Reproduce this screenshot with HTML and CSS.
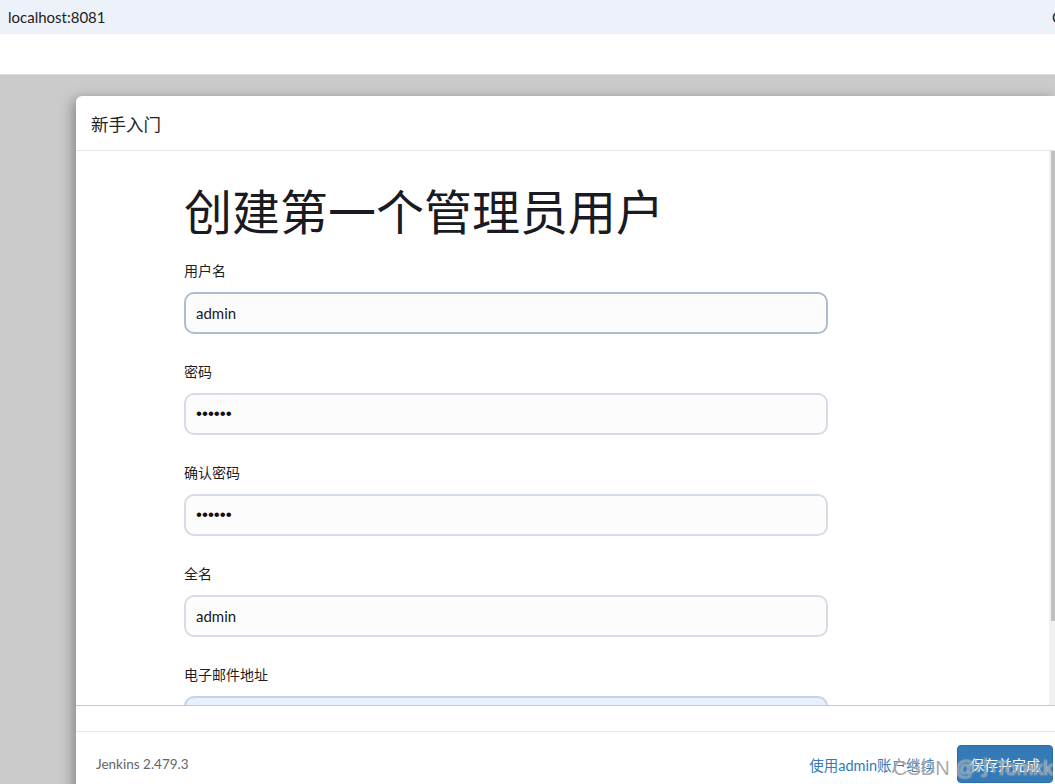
FILE: index.html
```html
<!DOCTYPE html>
<html lang="zh-CN">
<head>
<meta charset="utf-8">
<title>Jenkins</title>
<link rel="stylesheet" href="styles.css">
</head>
<body>
<div class="topbar"><span class="url">localhost:8081</span><span class="edge">C</span></div>
<div class="strip"></div>
<div class="stage">
  <div class="dialog">
    <div class="dlg-header">新手入门</div>
    <div class="dlg-body">
      <div class="content">
        <h1 class="title">创建第一个管理员用户</h1>
        <div class="field">
          <label class="lbl">用户名</label>
          <input class="inp inp-active" type="text" value="admin">
        </div>
        <div class="field">
          <label class="lbl">密码</label>
          <input class="inp inp-pw" type="password" value="aaaaaa">
        </div>
        <div class="field">
          <label class="lbl">确认密码</label>
          <input class="inp inp-pw" type="password" value="aaaaaa">
        </div>
        <div class="field">
          <label class="lbl">全名</label>
          <input class="inp" type="text" value="admin">
        </div>
        <div class="field">
          <label class="lbl">电子邮件地址</label>
          <input class="inp inp-auto" type="text" value="">
        </div>
      </div>
      <div class="scrollbar"><div class="thumb"></div></div>
    </div>
    <div class="dlg-gap"></div>
    <div class="dlg-footer">
      <span class="version">Jenkins 2.479.3</span>
      <span class="spacer"></span>
      <a class="skip" href="#">使用admin账户继续</a>
      <button class="save">保存并完成</button>
    </div>
  </div>
</div>
<div class="watermark">CSDN @小Tomkk</div>
</body>
</html>
```
FILE: styles.css
```css
html, body {
  margin: 0;
  padding: 0;
  height: 784px;
  overflow: hidden;
}
body {
  background: #cbcbcb;
  font-family: Lato, "Noto Sans CJK SC", sans-serif;
  color: #222;
  position: relative;
}
.topbar {
  height: 34px;
  background: #edf2fa;
  display: flex;
  align-items: center;
  justify-content: space-between;
  padding-left: 8px;
  overflow: hidden;
  font-size: 15px;
  color: #222;
}
.edge {
  margin-right: -7px;
  font-size: 15px;
}
.strip {
  height: 40px;
  background: #fff;
  border-bottom: 1px solid #dedede;
}
.stage {
  padding-top: 21px;
  padding-left: 76px;
}
.dialog {
  background: #fff;
  border-radius: 6px 0 0 0;
  box-shadow: -3px 3px 14px rgba(0, 0, 0, 0.35);
  height: 720px;
}
.dlg-header {
  height: 55px;
  box-sizing: border-box;
  padding: 0 15px;
  display: flex;
  align-items: center;
  font-size: 17.5px;
  color: #222;
  border-bottom: 1px solid #e5e5e5;
}
.dlg-body {
  height: 554px;
  display: flex;
  border-bottom: 1px solid #c9c9c9;
  overflow: hidden;
}
.content {
  flex: 1;
  padding: 31px 0 0 108px;
  overflow: hidden;
}
.title {
  margin: 0 0 24px;
  font-family: "Noto Sans CJK SC", sans-serif;
  font-size: 48px;
  line-height: 54px;
  font-weight: 400;
  color: #1a1a22;
}
.field {
  margin-bottom: 27px;
}
.lbl {
  display: block;
  font-size: 14px;
  line-height: 21px;
  margin-bottom: 11px;
  color: #1e1e1e;
}
.inp {
  display: block;
  box-sizing: border-box;
  width: 644px;
  height: 42px;
  border: 2px solid #d6dce7;
  border-radius: 10px;
  background: #fcfcfd;
  padding: 0 10px;
  font-family: Lato, "Noto Sans CJK SC", sans-serif;
  font-size: 15px;
  color: #1a1a1a;
  outline: none;
}
.inp-pw {
  font-family: "Liberation Sans", Arial, sans-serif;
  font-size: 17px;
  color: #111;
}
.inp-active {
  border-color: #aebcd0;
}
.inp-auto {
  background: #e8f0fe;
  border-color: #c6d3e8;
}
.scrollbar {
  width: 6px;
  background: #f1f1f1;
  display: flex;
  justify-content: flex-end;
}
.thumb {
  width: 4px;
  height: 470px;
  background: #c1c1c1;
}
.dlg-gap {
  height: 25px;
  border-bottom: 1px solid #e5e5e5;
}
.dlg-footer {
  display: flex;
  align-items: center;
  padding: 13px 2px 0 20px;
}
.version {
  font-size: 13.5px;
  color: #666;
}
.spacer {
  flex: 1;
}
.skip {
  font-size: 14.5px;
  color: #337ab7;
  text-decoration: none;
  margin-right: 22px;
}
.save {
  width: 96px;
  height: 38px;
  border: 1px solid #2e6da4;
  border-radius: 4px;
  background: #337ab7;
  color: #fff;
  font-family: "Noto Sans CJK SC", sans-serif;
  font-size: 14px;
  padding: 0;
}
.watermark {
  position: absolute;
  left: 893px;
  top: 752px;
  font-family: "Liberation Sans", Arial, "Noto Sans CJK SC", sans-serif;
  font-size: 20px;
  color: rgba(140, 140, 140, 0.75);
  text-shadow: 0 0 2px rgba(255, 255, 255, 0.9);
  white-space: nowrap;
  pointer-events: none;
}
```
